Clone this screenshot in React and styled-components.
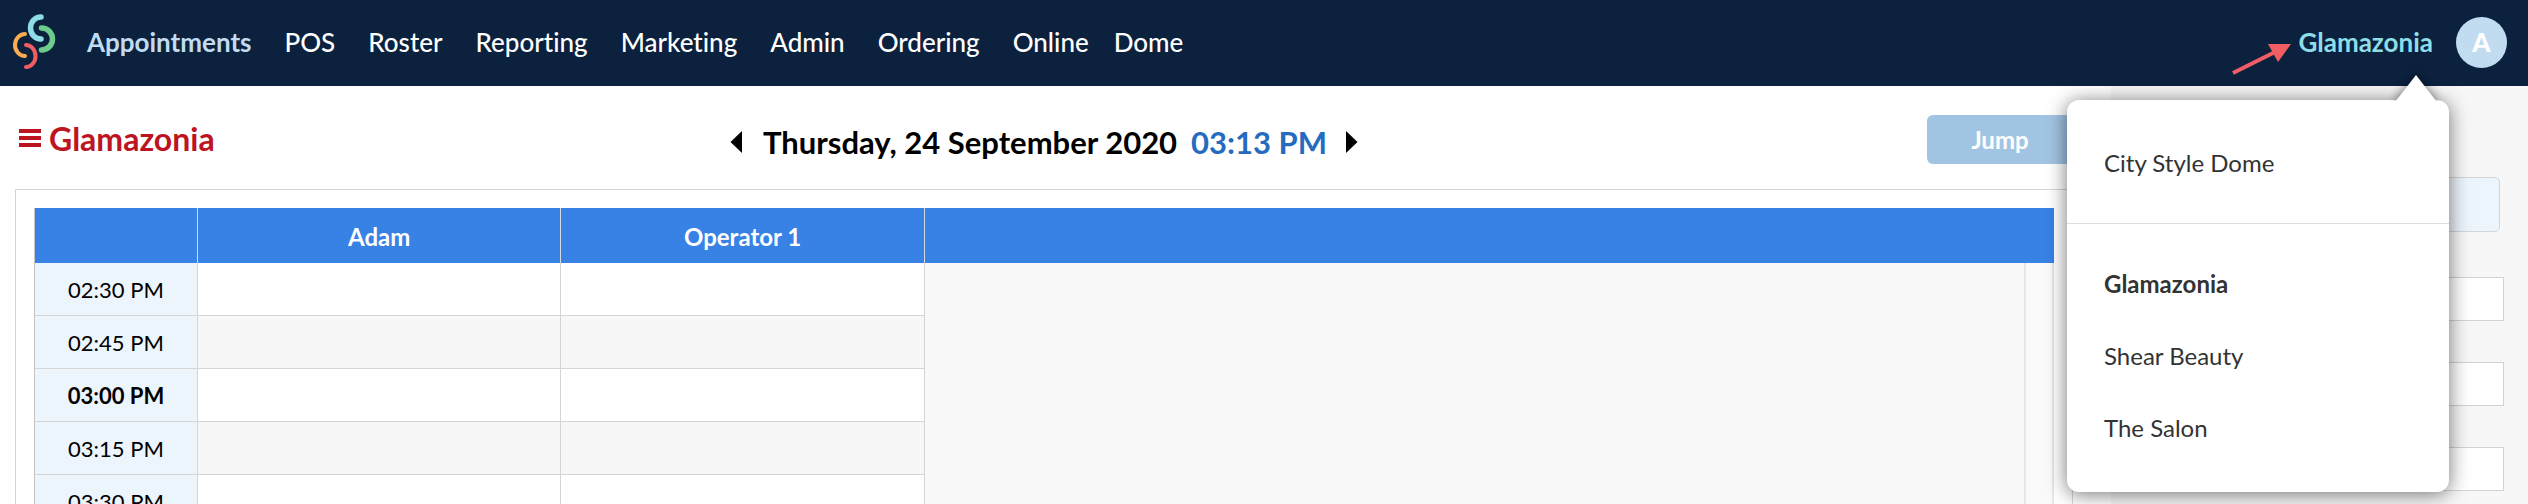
import React, { useState } from 'react';
import styled, { createGlobalStyle } from 'styled-components';

const GlobalStyle = createGlobalStyle`
    * {
        box-sizing: border-box;
    }

    body {
        margin: 0;
        background-color: #fff;
        color: #000;
        font-family: Lato, 'Open Sans', sans-serif;
        font-variant-ligatures: none;
    }

    button, input {
        font-family: inherit;
    }
`;

const Page = styled.div`
    display: flex;
    flex-direction: column;
    height: 100vh;
    overflow: hidden;
`;

const NavBar = styled.header`
    display: flex;
    align-items: center;
    flex-shrink: 0;
    height: 86px;
    padding: 0 21px 2px 12px;
    background-color: #0b213e;
`;

const Logo = styled.svg`
    display: block;
    width: 44px;
    height: 56px;
    margin-right: 31px;
`;

const NavLinks = styled.nav`
    display: flex;
    flex: 1;
    gap: 33px;
`;

const NavLink = styled.a`
    color: ${({active}) => active ? '#c1dcf0' : '#fff'};
    font-size: 26px;
    font-weight: ${({active}) => active ? 700 : 500};
    line-height: 32px;
    text-decoration: none;

    &:last-child {
        margin-left: -8px;
    }
`;

const SalonPicker = styled.div`
    position: relative;
    margin-right: 23px;
`;

const SalonButton = styled.button`
    display: block;
    padding: 0;
    border: 0;
    background: none;
    color: #8ddde8;
    font-size: 26px;
    font-weight: 700;
    line-height: 32px;
    cursor: pointer;
`;

const Pointer = styled.svg`
    position: absolute;
    top: 16px;
    right: 140px;
    width: 64px;
    height: 36px;
`;

const Avatar = styled.button`
    width: 51px;
    height: 51px;
    padding: 0;
    border: 0;
    border-radius: 50%;
    background-color: #c1dcf0;
    color: #fff;
    font-size: 26px;
    font-weight: 900;
    line-height: 32px;
`;

const Menu = styled.div`
    position: absolute;
    z-index: 2;
    top: 74px;
    right: -16px;
    width: 382px;
    padding: 3px 0 4px;
    border-radius: 12px;
    background-color: #fff;
    box-shadow: 0 2px 20px rgba(0, 0, 0, 0.55);
`;

const MenuTip = styled.svg`
    position: absolute;
    top: -25px;
    right: 12px;
    width: 42px;
    height: 50px;
    overflow: visible;
    filter: drop-shadow(0 -2px 5px rgba(0, 0, 0, 0.4));
    clip-path: inset(-20px -20px 24px -20px);
`;

const MenuSection = styled.div`
    padding: 24px 0;

    & + & {
        border-top: 1px solid #ddd;
    }
`;

const MenuItem = styled.button`
    display: block;
    width: 100%;
    height: 72px;
    padding: 0 37px;
    border: 0;
    background: none;
    color: #333;
    font-size: 24px;
    font-weight: ${({current}) => current ? 700 : 400};
    line-height: 30px;
    text-align: left;
    cursor: pointer;
`;

const Content = styled.div`
    display: flex;
    flex: 1;
    min-height: 0;
`;

const Main = styled.main`
    display: flex;
    flex: 1;
    flex-direction: column;
    min-width: 0;
    padding: 0 38px 0 15px;
`;

const Toolbar = styled.div`
    display: grid;
    grid-template-columns: 1fr auto 1fr;
    align-items: start;
    flex-shrink: 0;
    height: 103px;
    padding-top: 29px;
`;

const Title = styled.h1`
    display: flex;
    align-items: center;
    gap: 8px;
    margin: 0;
    padding: 4px 3px;
    color: #bd1421;
    font-size: 32px;
    font-weight: 700;
    line-height: 40px;
`;

const MenuButton = styled.button`
    display: block;
    padding: 0;
    border: 0;
    background: none;
`;

const DateNav = styled.div`
    display: flex;
    align-items: center;
    padding-top: 7px;
    font-size: 31px;
    font-weight: 700;
    line-height: 40px;
`;

const DateText = styled.span`
    margin: 0 14px 0 20px;
`;

const Time = styled.span`
    margin-right: 18px;
    color: #256bbf;
`;

const ArrowButton = styled.button`
    display: block;
    padding: 0;
    border: 0;
    background: none;
    cursor: pointer;

    svg {
        display: block;
    }
`;

const JumpButton = styled.button`
    justify-self: end;
    width: 146px;
    height: 49px;
    border: 0;
    border-radius: 6px;
    background-color: #a2c4e3;
    color: #fff;
    font-size: 24px;
    font-weight: 700;
    line-height: 30px;
`;

const Calendar = styled.section`
    flex: 1;
    min-height: 0;
    padding: 18px 18px 0;
    border: 1px solid #d5d5d5;
    border-bottom: 0;
    overflow: hidden;
`;

const Grid = styled.table`
    width: 100%;
    border-collapse: separate;
    border-spacing: 0;
    border-left: 1px solid #c4c4c4;
    table-layout: fixed;
`;

const Col = styled.col`
    width: ${({width}) => width};
`;

const HeadCell = styled.th`
    height: 55px;
    padding: 2px 0 0;
    border-right: ${({last}) => last ? 0 : '1px solid #d5dbe3'};
    background-color: #3881e5;
    color: #fff;
    font-size: 24px;
    font-weight: 700;
    line-height: 30px;
`;

const TimeCell = styled.th`
    height: 53px;
    padding: 2px 0 0;
    border-right: 1px solid #d5d5d5;
    border-bottom: 1px solid #d5d5d5;
    background-color: #edf5fc;
    font-size: 22px;
    font-weight: ${({current}) => current ? 700 : 400};
    line-height: 28px;
`;

const Slot = styled.td`
    padding: 0;
    border-right: 1px solid #d5d5d5;
    border-bottom: 1px solid #d5d5d5;
    background-color: ${({shaded}) => shaded ? '#f7f7f7' : '#fff'};
`;

const Blank = styled.td`
    padding: 0;
    border-right: 2px solid #e6e6e6;
    background-color: ${({gutter}) => gutter ? '#fafafa' : '#f8f8f8'};
`;

const Sidebar = styled.aside`
    display: flex;
    flex-direction: column;
    flex-shrink: 0;
    gap: 41px;
    width: 417px;
    padding: 91px 24px 0 28px;
    background-color: #f7f7f7;
`;

const SearchButton = styled.button`
    height: 55px;
    margin: 0 4px 4px 0;
    border: 1px solid #d3d6d9;
    border-radius: 5px;
    background-color: #edf5fc;
`;

const Field = styled.input`
    width: 100%;
    height: 44px;
    padding: 0 12px;
    border: 1px solid #d3d3d3;
    background-color: #fff;
    font-size: 22px;
`;

const links = ['Appointments', 'POS', 'Roster', 'Reporting', 'Marketing', 'Admin', 'Ordering', 'Online', 'Dome'];
const salons = ['Glamazonia', 'Shear Beauty', 'The Salon'];
const operators = ['Adam', 'Operator 1'];
const times = ['02:30 PM', '02:45 PM', '03:00 PM', '03:15 PM', '03:30 PM'];
const fields = ['First name', 'Last name', 'Mobile'];

const BrandLogo = () => (
    <Logo viewBox="0 0 44 56" fill="none" strokeLinecap="round" aria-hidden="true">
        <path d="M29 3 A10.5 11 0 0 0 29 25" stroke="#8ddde8" strokeWidth="5.5" />
        <path d="M29.5 14 A11 11 0 0 1 29.5 36" stroke="#6dcc8b" strokeWidth="5.5" />
        <path d="M13 20 A10 11 0 0 0 13 42" stroke="#fcad52" strokeWidth="4" />
        <path d="M14 31 A9.5 11 0 0 1 14 53" stroke="#f05e64" strokeWidth="4" />
    </Logo>
);

const Arrow = ({ next }) => (
    <svg width="13" height="24" viewBox="0 0 13 24" aria-hidden="true">
        <path d={next ? 'M1 1 L12.5 12 L1 23 Z' : 'M12 1 L0.5 12 L12 23 Z'} fill="#000" />
    </svg>
);

const App = () => {
    const [open, setOpen] = useState(true);
    const [salon, setSalon] = useState('Glamazonia');

    return (
        <Page>
            <GlobalStyle />
            <NavBar>
                <BrandLogo />
                <NavLinks>
                    {links.map((link, i) => (
                        <NavLink key={link} href="#" active={i === 0 ? 1 : undefined}>{link}</NavLink>
                    ))}
                </NavLinks>
                <SalonPicker>
                    <Pointer viewBox="0 0 64 36" aria-hidden="true">
                        <path d="M4 31 L48 9" stroke="#f05e64" strokeWidth="4" />
                        <path d="M62 2 L39 2 L49 20 Z" fill="#f05e64" />
                    </Pointer>
                    <SalonButton aria-expanded={open} onClick={() => setOpen(!open)}>{salon}</SalonButton>
                    {open && (
                        <Menu>
                            <MenuTip viewBox="0 0 42 50" aria-hidden="true">
                                <path d="M21 0 L42 27 L21 50 L0 27 Z" fill="#fff" />
                            </MenuTip>
                            <MenuSection>
                                <MenuItem>City Style Dome</MenuItem>
                            </MenuSection>
                            <MenuSection>
                                {salons.map(name => (
                                    <MenuItem
                                        key={name}
                                        current={name === salon ? 1 : undefined}
                                        onClick={() => setSalon(name)}
                                    >
                                        {name}
                                    </MenuItem>
                                ))}
                            </MenuSection>
                        </Menu>
                    )}
                </SalonPicker>
                <Avatar>A</Avatar>
            </NavBar>
            <Content>
                <Main>
                    <Toolbar>
                        <Title>
                            <MenuButton aria-label="Open menu">
                                <svg width="23" height="20" viewBox="0 0 23 20" aria-hidden="true">
                                    <path d="M1 3 H23 M1 10 H23 M1 17 H23" stroke="#bd1421" strokeWidth="4" />
                                </svg>
                            </MenuButton>
                            {salon}
                        </Title>
                        <DateNav>
                            <ArrowButton aria-label="Previous day"><Arrow /></ArrowButton>
                            <DateText>Thursday, 24 September 2020</DateText>
                            <Time>03:13 PM</Time>
                            <ArrowButton aria-label="Next day"><Arrow next /></ArrowButton>
                        </DateNav>
                        <JumpButton>Jump</JumpButton>
                    </Toolbar>
                    <Calendar>
                        <Grid>
                            <colgroup>
                                <Col width="163px" />
                                <Col width="18%" />
                                <Col width="18%" />
                                <Col />
                                <Col width="28px" />
                            </colgroup>
                            <thead>
                                <tr>
                                    <HeadCell />
                                    {operators.map(name => (
                                        <HeadCell key={name} scope="col">{name}</HeadCell>
                                    ))}
                                    <HeadCell colSpan={2} last={1} />
                                </tr>
                            </thead>
                            <tbody>
                                {times.map((time, i) => (
                                    <tr key={time}>
                                        <TimeCell scope="row" current={time === '03:00 PM' ? 1 : undefined}>
                                            {time}
                                        </TimeCell>
                                        {operators.map(name => (
                                            <Slot key={name} shaded={i % 2 ? 1 : undefined} />
                                        ))}
                                        <Blank />
                                        <Blank gutter={1} />
                                    </tr>
                                ))}
                            </tbody>
                        </Grid>
                    </Calendar>
                </Main>
                <Sidebar>
                    <SearchButton aria-label="Find client" />
                    {fields.map(name => (
                        <Field key={name} aria-label={name} />
                    ))}
                </Sidebar>
            </Content>
        </Page>
    );
};

export default App;
